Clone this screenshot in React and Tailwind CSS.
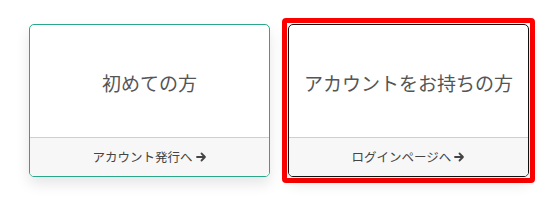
import React from "react";

const cards = [
  { id: "new", title: "初めての方", link: "アカウント発行へ", border: "border-[#2aa68a]", focused: false },
  { id: "login", title: "アカウントをお持ちの方", link: "ログインページへ", border: "border-[#111111]", focused: true }
];

function Arrow() {
  return (
    <svg width="11" height="10" viewBox="0 0 11 10" className="ml-[3px] inline-block">
      <path d="M1 5h8M5.5 1.5 9 5 5.5 8.5" fill="none" stroke="#444" strokeWidth="1.8" strokeLinecap="round" strokeLinejoin="round" />
    </svg>
  );
}

function Card({ card }) {
  return (
    <a href="#"
      className={`flex h-[153px] w-[241px] flex-col overflow-hidden rounded-[5px] border bg-white shadow-[0_7px_14px_rgba(0,0,0,0.1)] ${card.border}`}>
      <div className="flex flex-1 items-center justify-center pt-[4px] text-[19px] text-[#555]">{card.title}</div>
      <div className="flex h-[39px] items-center justify-center border-t border-[#cfcfcf] bg-[#f7f7f7] text-[12.5px] text-[#444]">
        {card.link}
        <Arrow />
      </div>
    </a>
  );
}

export default function App() {
  return (
    <main className="h-[201px] w-[558px] bg-white" style={{ fontFamily: '"Noto Sans CJK JP", "Noto Sans", sans-serif' }}>
      <div className="flex justify-center gap-[18px] pt-[24px]">
        {cards.map((card) =>
          card.focused ? (
            <div key={card.id} className="-m-[6px] rounded-[4px] border-[5px] border-[#ff0000] p-px">
              <Card card={card} />
            </div>
          ) : (
            <Card key={card.id} card={card} />
          )
        )}
      </div>
    </main>
  );
}
